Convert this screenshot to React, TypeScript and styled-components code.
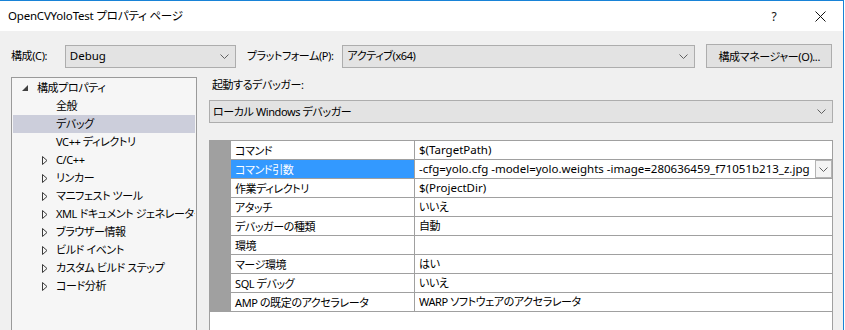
import React from "react";
import styled, { createGlobalStyle, css } from "styled-components";

const GlobalStyle = createGlobalStyle`
  html, body {
    margin: 0;
    padding: 0;
    background: #ffffff;
    overflow: hidden;
  }
  body {
    font-family: "Noto Sans", "Noto Sans CJK JP", sans-serif;
    font-size: 11.5px;
    color: #000000;
  }
  * {
    box-sizing: border-box;
  }
`;

// Japanese UI text is narrower in the original (Yu Gothic UI)
const jp = css`
  font-size: 11px;
  letter-spacing: -0.4px;
`;

const Window = styled.div`
  width: 844px;
  height: 330px;
  border-top: 1px solid #1883d7;
  border-right: 1px solid #1883d7;
  background: #f0f0f0;
  display: flex;
  flex-direction: column;
  overflow: hidden;
  font-feature-settings: "palt";
`;

const TitleBar = styled.div`
  height: 30px;
  flex-shrink: 0;
  background: #ffffff;
  display: flex;
  align-items: center;
  padding-left: 8px;
`;

const Title = styled.span`
  flex: 1;
  line-height: 16px;
  font-size: 11.5px;
  letter-spacing: -0.2px;
`;

const CaptionButton = styled.div`
  width: 46px;
  height: 30px;
  display: flex;
  align-items: center;
  justify-content: center;
  font-size: 12px;
  color: #111;
`;

const Content = styled.div`
  flex: 1;
  min-height: 0;
  display: flex;
  flex-direction: column;
  padding: 13px 11px 0 11px;
`;

const ConfigBar = styled.div`
  display: flex;
  align-items: center;
  height: 24px;
  flex-shrink: 0;
`;

const FieldLabel = styled.span<{ $w: number; $ml?: number }>`
  ${jp};
  width: ${({ $w }) => $w}px;
  margin-left: ${({ $ml }) => $ml || 0}px;
  line-height: 16px;
  white-space: nowrap;
`;

const Combo = styled.div<{ $w: number; $pl?: number }>`
  width: ${({ $w }) => $w}px;
  height: 23px;
  flex-shrink: 0;
  background: #e3e3e3;
  border: 1px solid #adadad;
  display: flex;
  align-items: center;
  padding: 0 6px 0 ${({ $pl }) => $pl ?? 4}px;
`;

const ComboText = styled.span<{ $jp?: boolean }>`
  ${({ $jp }) => $jp && jp};
  flex: 1;
  line-height: 16px;
  white-space: nowrap;
  overflow: hidden;
`;

const Button = styled.div`
  ${jp};
  width: 126px;
  height: 24px;
  margin-left: 11px;
  background: #e1e1e1;
  border: 1px solid #adadad;
  display: flex;
  align-items: center;
  justify-content: center;
  white-space: nowrap;
`;

const Main = styled.div`
  flex: 1;
  min-height: 0;
  display: flex;
  margin-top: 9px;
`;

const Tree = styled.div`
  ${jp};
  width: 186px;
  flex-shrink: 0;
  background: #f6f6f6;
  border: 1px solid #9a9a9a;
  padding: 1px 1px 0 1px;
  margin-bottom: -10px;
`;

const TreeItem = styled.div<{ $selected?: boolean; $child?: boolean }>`
  height: 18px;
  display: flex;
  align-items: center;
  padding-left: ${({ $child }) => ($child ? 29 : 9)}px;
  background: ${({ $selected }) => ($selected ? "#cccedb" : "transparent")};
  white-space: nowrap;
  overflow: hidden;
`;

const Expander = styled.span<{ $child?: boolean }>`
  width: ${({ $child }) => ($child ? 14 : 15)}px;
  flex-shrink: 0;
  display: flex;
  align-items: center;
`;

const TreeText = styled.span`
  line-height: 16px;
`;

const RightPane = styled.div`
  width: 624px;
  margin-left: 12px;
  display: flex;
  flex-direction: column;
`;

const SectionLabel = styled.div`
  ${jp};
  line-height: 16px;
  padding-left: 3px;
`;

const DebuggerCombo = styled(Combo)`
  margin-top: 7px;
`;

const PropGrid = styled.div`
  flex: 1;
  margin-top: 17px;
  margin-bottom: -10px;
  background: #ffffff;
  border: 1px solid #a0a0a0;
`;

const PropRow = styled.div`
  display: grid;
  grid-template-columns: 21px 184px 1fr;
  height: 19px;
  border-bottom: 1px solid #a0a0a0;
`;

const Gutter = styled.div`
  background: #a0a0a0;
  margin-bottom: -1px;
`;

const NameCell = styled.div<{ $selected?: boolean }>`
  ${jp};
  border-right: 1px solid #a0a0a0;
  background: ${({ $selected }) => ($selected ? "#3399ff" : "#ffffff")};
  color: ${({ $selected }) => ($selected ? "#ffffff" : "#000000")};
  padding-left: 4px;
  display: flex;
  align-items: center;
  white-space: nowrap;
  overflow: hidden;
`;

const ValueCell = styled.div`
  display: flex;
  align-items: center;
  padding-left: 4px;
  min-width: 0;
  overflow: hidden;
`;

const ValueText = styled.span<{ $jp?: boolean }>`
  ${({ $jp }) => $jp && jp};
  flex: 1;
  min-width: 0;
  line-height: 16px;
  white-space: nowrap;
  overflow: hidden;
`;

const CellDrop = styled.div`
  width: 17px;
  height: 18px;
  flex-shrink: 0;
  background: #f4f4f4;
  border: 1px solid #b4b4b4;
  display: flex;
  align-items: center;
  justify-content: center;
`;

const Chevron = () => (
  <svg width="9" height="5" viewBox="0 0 9 5">
    <path d="M0.5 0.5 L4.5 4.5 L8.5 0.5" fill="none" stroke="#606060" strokeWidth="1" />
  </svg>
);

const CloseIcon = () => (
  <svg width="11" height="11" viewBox="0 0 11 11">
    <path d="M0.5 0.5 L10.5 10.5 M10.5 0.5 L0.5 10.5" stroke="#111" strokeWidth="1" />
  </svg>
);

const OpenArrow = () => (
  <svg width="6" height="6" viewBox="0 0 6 6">
    <polygon points="6,0 6,6 0,6" fill="#404040" />
  </svg>
);

const ClosedArrow = () => (
  <svg width="6" height="9" viewBox="0 0 6 9">
    <polygon points="0.5,0.5 5,4.5 0.5,8.5" fill="none" stroke="#3a3a3a" strokeWidth="1" />
  </svg>
);

type Node = { label: string; child?: boolean; expandable?: boolean; open?: boolean; selected?: boolean };

const treeNodes: Node[] = [
  { label: "構成プロパティ", expandable: true, open: true },
  { label: "全般", child: true },
  { label: "デバッグ", child: true, selected: true },
  { label: "VC++ ディレクトリ", child: true },
  { label: "C/C++", child: true, expandable: true },
  { label: "リンカー", child: true, expandable: true },
  { label: "マニフェスト ツール", child: true, expandable: true },
  { label: "XML ドキュメント ジェネレーター", child: true, expandable: true },
  { label: "ブラウザー情報", child: true, expandable: true },
  { label: "ビルド イベント", child: true, expandable: true },
  { label: "カスタム ビルド ステップ", child: true, expandable: true },
  { label: "コード分析", child: true, expandable: true },
];

type Prop = { name: string; value: string; jp?: boolean; selected?: boolean };

const props: Prop[] = [
  { name: "コマンド", value: "$(TargetPath)" },
  { name: "コマンド引数", value: "-cfg=yolo.cfg -model=yolo.weights -image=280636459_f71051b213_z.jpg", selected: true },
  { name: "作業ディレクトリ", value: "$(ProjectDir)" },
  { name: "アタッチ", value: "いいえ", jp: true },
  { name: "デバッガーの種類", value: "自動", jp: true },
  { name: "環境", value: "" },
  { name: "マージ環境", value: "はい", jp: true },
  { name: "SQL デバッグ", value: "いいえ", jp: true },
  { name: "AMP の既定のアクセラレータ", value: "WARP ソフトウェアのアクセラレータ", jp: true },
];

export default function App() {
  return (
    <>
      <GlobalStyle />
      <Window>
        <TitleBar>
          <Title>OpenCVYoloTest プロパティ ページ</Title>
          <CaptionButton>?</CaptionButton>
          <CaptionButton>
            <CloseIcon />
          </CaptionButton>
        </TitleBar>
        <Content>
          <ConfigBar>
            <FieldLabel $w={54}>構成(C):</FieldLabel>
            <Combo $w={171}>
              <ComboText>Debug</ComboText>
              <Chevron />
            </Combo>
            <FieldLabel $w={96} $ml={11}>
              プラットフォーム(P):
            </FieldLabel>
            <Combo $w={353}>
              <ComboText $jp>アクティブ(x64)</ComboText>
              <Chevron />
            </Combo>
            <Button>構成マネージャー(O)...</Button>
          </ConfigBar>
          <Main>
            <Tree>
              {treeNodes.map((n) => (
                <TreeItem key={n.label} $child={n.child} $selected={n.selected}>
                  <Expander $child={n.child}>
                    {n.expandable ? n.open ? <OpenArrow /> : <ClosedArrow /> : null}
                  </Expander>
                  <TreeText>{n.label}</TreeText>
                </TreeItem>
              ))}
            </Tree>
            <RightPane>
              <SectionLabel>起動するデバッガー:</SectionLabel>
              <DebuggerCombo $w={624} $pl={3}>
                <ComboText $jp>ローカル Windows デバッガー</ComboText>
                <Chevron />
              </DebuggerCombo>
              <PropGrid>
                {props.map((p) => (
                  <PropRow key={p.name}>
                    <Gutter />
                    <NameCell $selected={p.selected}>{p.name}</NameCell>
                    <ValueCell>
                      <ValueText $jp={p.jp}>{p.value}</ValueText>
                      {p.selected && (
                        <CellDrop>
                          <Chevron />
                        </CellDrop>
                      )}
                    </ValueCell>
                  </PropRow>
                ))}
              </PropGrid>
            </RightPane>
          </Main>
        </Content>
      </Window>
    </>
  );
}
